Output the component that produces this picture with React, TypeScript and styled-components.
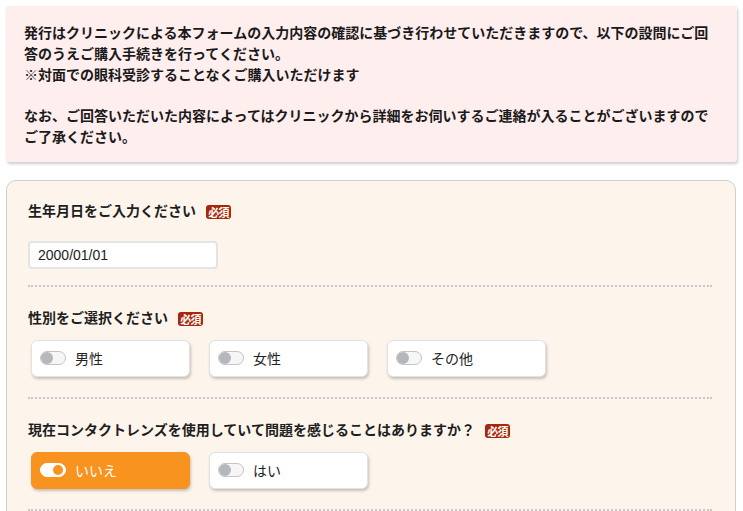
import React from "react";
import styled, { createGlobalStyle } from "styled-components";

const GlobalStyle = createGlobalStyle`
  html, body { margin: 0; padding: 0; background: #ffffff; }
  body {
    font-family: "Noto Sans CJK JP", "Noto Sans", sans-serif;
    color: #222222;
  }
  * { box-sizing: border-box; }
`;

const Page = styled.div`
  padding: 6px 6px 0 6px;
  width: 743px;
`;

const Notice = styled.div`
  width: 731px;
  background: #ffeeee;
  border-radius: 3px;
  box-shadow: 1px 2px 3px rgba(0, 0, 0, 0.2);
  padding: 16px 10px 15px 18px;
  font-size: 14px;
  font-weight: 700;
  line-height: 20.8px;
  color: #1a1a1a;
  white-space: nowrap;
`;

const Form = styled.div`
  margin-top: 18px;
  width: 730px;
  background: #fdf5ec;
  border: 1px solid #cfcfcf;
  border-radius: 10px;
  padding: 0 23px 40px 21px;
`;

const Section = styled.div<{ $top: number; $bottom: number }>`
  padding: ${(p) => p.$top}px 0 ${(p) => p.$bottom}px 0;
  border-bottom: 2px dotted #c8c8c8;
`;

const TitleRow = styled.div`
  display: flex;
  align-items: center;
  height: 21px;
`;

const Title = styled.span`
  font-size: 14px;
  font-weight: 700;
  line-height: 21px;
  color: #1e1e1e;
`;

const Badge = styled.span`
  margin-left: 10px;
  margin-top: 4px;
  display: inline-flex;
  align-items: center;
  justify-content: center;
  width: 25px;
  height: 14px;
  border-radius: 3px;
  background: #a8270a;
  color: #ffffff;
  font-size: 11px;
  font-weight: 700;
  line-height: 1;
  letter-spacing: -0.8px;
`;

const DateInput = styled.div`
  margin-top: 20px;
  width: 190px;
  height: 28px;
  background: #ffffff;
  border: 2px solid #e4e4e4;
  border-radius: 4px;
  display: flex;
  align-items: center;
  padding-left: 8px;
  font-family: "Liberation Sans", Arial, sans-serif;
  font-size: 14px;
  color: #222222;
`;

const Options = styled.div`
  margin-top: 12px;
  display: flex;
  gap: 19px;
  padding-left: 3px;
`;

const Option = styled.div<{ $on?: boolean }>`
  width: 159px;
  height: 37px;
  border-radius: 6px;
  background: ${(p) => (p.$on ? "#f7931e" : "#ffffff")};
  border: 1px solid ${(p) => (p.$on ? "#f7931e" : "#e2e2e2")};
  box-shadow: 1px 2px 3px rgba(0, 0, 0, 0.22);
  display: flex;
  align-items: center;
  padding-left: 8px;
  gap: 9px;
  font-size: 14px;
  color: ${(p) => (p.$on ? "#ffffff" : "#222222")};
`;

const Toggle = styled.span<{ $on?: boolean }>`
  position: relative;
  width: 26px;
  height: 14px;
  border-radius: 7px;
  background: ${(p) => (p.$on ? "#ffffff" : "#f6f6f6")};
  border: 1px solid ${(p) => (p.$on ? "#ffffff" : "#c4c4c4")};
  flex: none;
`;

const Knob = styled.span<{ $on?: boolean }>`
  position: absolute;
  top: ${(p) => (p.$on ? "1px" : "0px")};
  ${(p) => (p.$on ? "right: 2px;" : "left: 0px;")}
  width: ${(p) => (p.$on ? "10px" : "12px")};
  height: ${(p) => (p.$on ? "10px" : "12px")};
  border-radius: 50%;
  background: ${(p) => (p.$on ? "#f7931e" : "#b4b8bd")};
`;

const Label = styled.span`
  line-height: 20px;
`;

type Choice = { label: string; on?: boolean };

const Choices = ({ items }: { items: Choice[] }) => (
  <Options>
    {items.map((c) => (
      <Option key={c.label} $on={c.on}>
        <Toggle $on={c.on}>
          <Knob $on={c.on} />
        </Toggle>
        <Label>{c.label}</Label>
      </Option>
    ))}
  </Options>
);

export default function App() {
  return (
    <>
      <GlobalStyle />
      <Page>
        <Notice>
          発行はクリニックによる本フォームの入力内容の確認に基づき行わせていただきますので、以下の設問にご回
          <br />
          答のうえご購入手続きを行ってください。
          <br />
          ※対面での眼科受診することなくご購入いただけます
          <br />
          <br />
          なお、ご回答いただいた内容によってはクリニックから詳細をお伺いするご連絡が入ることがございますので
          <br />
          ご了承ください。
        </Notice>
        <Form>
          <Section $top={19} $bottom={16}>
            <TitleRow>
              <Title>生年月日をご入力ください</Title>
              <Badge>必須</Badge>
            </TitleRow>
            <DateInput>2000/01/01</DateInput>
          </Section>
          <Section $top={20} $bottom={20}>
            <TitleRow>
              <Title>性別をご選択ください</Title>
              <Badge>必須</Badge>
            </TitleRow>
            <Choices items={[{ label: "男性" }, { label: "女性" }, { label: "その他" }]} />
          </Section>
          <Section $top={20} $bottom={20}>
            <TitleRow>
              <Title>現在コンタクトレンズを使用していて問題を感じることはありますか？</Title>
              <Badge>必須</Badge>
            </TitleRow>
            <Choices items={[{ label: "いいえ", on: true }, { label: "はい" }]} />
          </Section>
        </Form>
      </Page>
    </>
  );
}
